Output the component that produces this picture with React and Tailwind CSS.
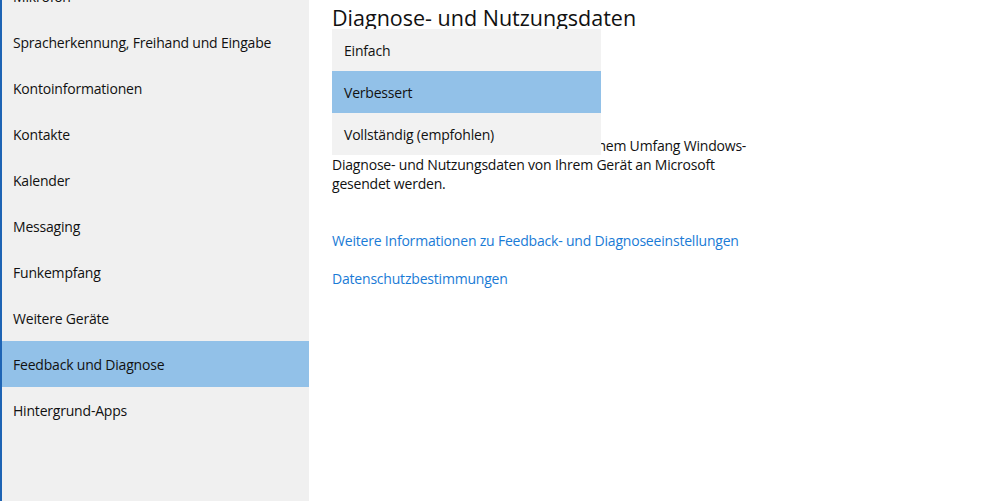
const navItems = [
  'Mikrofon',
  'Spracherkennung, Freihand und Eingabe',
  'Kontoinformationen',
  'Kontakte',
  'Kalender',
  'Messaging',
  'Funkempfang',
  'Weitere Geräte',
  'Feedback und Diagnose',
  'Hintergrund-Apps',
];

const options = ['Einfach', 'Verbessert', 'Vollständig (empfohlen)'];

export default function App() {
  const selectedNav = 'Feedback und Diagnose';
  const selectedOption = 'Verbessert';

  return (
    <div
      className="flex h-[501px] w-[1000px] overflow-hidden bg-white tracking-[-0.2px] text-[#111]"
      style={{ fontFamily: '"Open Sans", "Noto Sans", sans-serif' }}
    >
      {/* sidebar */}
      <div className="w-[309px] shrink-0 border-l-2 border-[#1e64b4] bg-[#f0f0f0]">
        <div className="-mt-[27px] flex flex-col">
          {navItems.map((item) => (
            <div
              key={item}
              className={`flex h-[46px] items-center pl-[11px] text-[14px] ${
                item === selectedNav ? 'bg-[#92c1e8]' : ''
              }`}
            >
              {item}
            </div>
          ))}
        </div>
      </div>

      {/* content */}
      <div className="relative flex-1 pl-[23px]">
        <h1 className="mt-[4px] text-[21.5px] font-normal leading-[28px] tracking-normal text-[#111]">
          Diagnose- und Nutzungsdaten
        </h1>
        <p className="mt-[104px] w-[440px] whitespace-nowrap text-[14px] leading-[19px]">
          Über diese Einstellung steuern Sie, in welchem Umfang Windows-
          <br />
          Diagnose- und Nutzungsdaten von Ihrem Gerät an Microsoft
          <br />
          gesendet werden.
        </p>
        <div className="mt-[38px] flex flex-col gap-[19px] text-[14px] leading-[19px] text-[#1a7bd6]">
          <a href="#">Weitere Informationen zu Feedback- und Diagnoseeinstellungen</a>
          <a href="#">Datenschutzbestimmungen</a>
        </div>

        {/* open dropdown */}
        <div className="absolute left-[23px] top-[29px] w-[269px] bg-[#f2f2f2]">
          {options.map((opt) => (
            <div
              key={opt}
              className={`flex h-[42px] items-center pl-[12px] text-[14px] ${
                opt === selectedOption ? 'bg-[#92c1e8]' : ''
              }`}
            >
              {opt}
            </div>
          ))}
        </div>
      </div>
    </div>
  );
}
